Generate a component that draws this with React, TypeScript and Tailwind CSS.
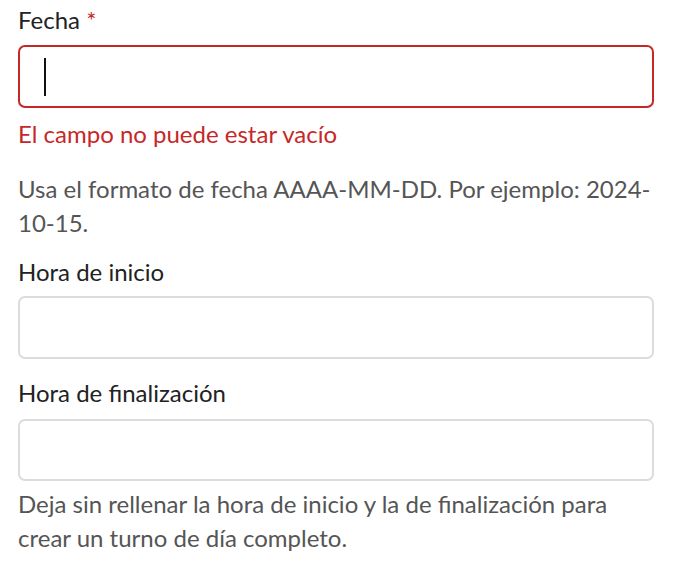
import React from "react";

export default function App() {
  const font = { fontFamily: "Lato, 'Open Sans', sans-serif" };
  return (
    <div className="w-[674px] h-[570px] bg-white px-[18px] pt-[3px] text-[24px] leading-[34px]" style={font}>
      <div className="text-[#222]">
        Fecha <span className="text-[#c62828]">*</span>
      </div>
      <div className="mt-[8px] h-[63px] w-[636px] rounded-[7px] border-2 border-[#c62828] flex items-center pl-[24px]">
        <div className="w-[2px] h-[38px] bg-[#111]" />
      </div>
      <div className="mt-[9px] text-[#c62828]">El campo no puede estar vacío</div>
      <div className="mt-[21px] text-[#555] w-[636px]">
        Usa el formato de fecha AAAA-MM-DD. Por ejemplo: 2024-10-15.
      </div>
      <div className="mt-[15px] text-[#222]">Hora de inicio</div>
      <div className="mt-[7px] h-[63px] w-[636px] rounded-[7px] border-2 border-[#dcdcdf]" />
      <div className="mt-[17px] text-[#222]">Hora de finalización</div>
      <div className="mt-[9px] h-[62px] w-[636px] rounded-[7px] border-2 border-[#dcdcdf]" />
      <div className="mt-[6px] text-[#555] w-[636px]">
        Deja sin rellenar la hora de inicio y la de finalización para crear un turno de día completo.
      </div>
    </div>
  );
}
